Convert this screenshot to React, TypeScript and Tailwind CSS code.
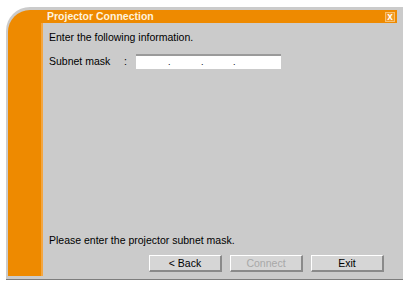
import React from "react";

const font = { fontFamily: '"Liberation Sans", Arial, sans-serif' };

function Btn({ label, disabled }: { label: string; disabled?: boolean }) {
  return (
    <div
      className={`w-[73px] h-[17px] flex items-center justify-center bg-[#d6d6d6] border-t border-l border-t-white border-l-white border-b-2 border-r-2 border-b-[#8a8a8a] border-r-[#8a8a8a] text-[10.5px] leading-none ${
        disabled ? "text-[#a8a8a8]" : "text-black"
      }`}
    >
      {label}
    </div>
  );
}

export default function App() {
  return (
    <div className="w-[403px] h-[282px] bg-white pl-[6px] pt-[7px]" style={font}>
      <div className="w-[397px] h-[273px] bg-[#cbcbcb] rounded-tl-[24px] border-b border-[#7d7d7d] pl-[2px] pt-[3px] flex flex-col">
        <div className="w-[389px] h-[266px] bg-[#ee8a00] rounded-tl-[22px] flex flex-col">
          {/* title bar */}
          <div className="h-[13px] flex items-center justify-between pl-[39px] pr-[2px]">
            <span className="text-[10.5px] font-bold text-[#fff3dc] leading-none">
              Projector Connection
            </span>
            <div className="w-[10px] h-[10px] bg-[#f29a25] border border-[#f7c070] flex items-center justify-center text-white text-[10px] font-bold leading-none">
              x
            </div>
          </div>
          {/* body */}
          <div className="flex-1 flex">
            <div className="w-[35px] border-r-2 border-[#f4a640]" />
            <div className="flex-1 bg-[#cbcbcb] -mr-[6px] -mb-[3px] pl-[6px] pr-[19px] flex flex-col text-[10.5px] text-black">
              <div className="mt-[8px] leading-[13px]">Enter the following information.</div>
              <div className="mt-[10px] flex items-center">
                <span className="w-[75px]">Subnet mask</span>
                <span className="w-[12px]">:</span>
                <div className="w-[145px] h-[15px] bg-white border-t-2 border-[#9a9a9a] relative">
                  <span className="absolute left-[32px] top-[2px] text-[9px] leading-none">.</span>
                  <span className="absolute left-[65px] top-[2px] text-[9px] leading-none">.</span>
                  <span className="absolute left-[97px] top-[2px] text-[9px] leading-none">.</span>
                </div>
              </div>
              <div className="flex-1" />
              <div className="leading-[13px]">Please enter the projector subnet mask.</div>
              <div className="mt-[8px] mb-[7px] flex justify-end gap-[8px]">
                <Btn label="< Back" />
                <Btn label="Connect" disabled />
                <Btn label="Exit" />
              </div>
            </div>
          </div>
        </div>
      </div>
    </div>
  );
}
